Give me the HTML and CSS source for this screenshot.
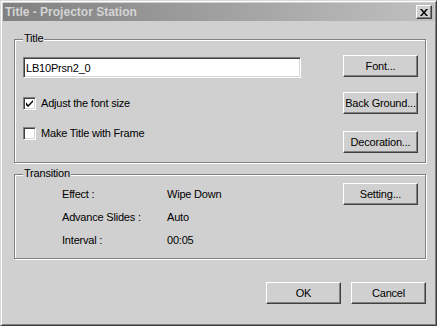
FILE: index.html
```html
<!DOCTYPE html>
<html lang="en">
<head>
    <meta charset="UTF-8">
    <title>Title - Projector Station</title>
    <link rel="stylesheet" href="styles.css">
</head>
<body>
<div class="window">
    <div class="titlebar">
        <span class="caption">Title - Projector Station</span>
        <button class="close" type="button">
            <svg width="8" height="7" viewBox="0 0 8 7">
                <path d="M0 0h2l2 2.5L6 0h2L5 3.5 8 7H6L4 4.5 2 7H0l3-3.5z" fill="#000"/>
            </svg>
        </button>
    </div>
    <div class="client">
        <div class="group group-title">
            <span class="legend">Title</span>
            <div class="col-left">
                <input class="textbox" type="text" value="LB10Prsn2_0">
                <label class="check first">
                    <span class="box">
                        <svg width="7" height="7" viewBox="0 0 7 7">
                            <path d="M0 2v3l2 2 5-5V0L2 5z" fill="#000"/>
                        </svg>
                    </span>
                    Adjust the font size
                </label>
                <label class="check second">
                    <span class="box"></span>
                    Make Title with Frame
                </label>
            </div>
            <div class="col-right">
                <button class="btn" type="button">Font...</button>
                <button class="btn bg" type="button">Back Ground...</button>
                <button class="btn deco" type="button">Decoration...</button>
            </div>
        </div>
        <div class="group group-trans">
            <span class="legend">Transition</span>
            <div class="info">
                <span>Effect :</span><span>Wipe Down</span>
                <span>Advance Slides :</span><span>Auto</span>
                <span>Interval :</span><span>00:05</span>
            </div>
            <div class="col-right">
                <button class="btn setting" type="button">Setting...</button>
            </div>
        </div>
        <div class="footer">
            <button class="btn" type="button">OK</button>
            <button class="btn" type="button">Cancel</button>
        </div>
    </div>
</div>
</body>
</html>
```

FILE: styles.css
```css
body {
    margin: 0;
    background: #d0d0d0;
    font-family: "Liberation Sans", Arial, sans-serif;
    font-size: 11px;
    letter-spacing: -0.2px;
    color: #000;
}
.window {
    width: 437px;
    height: 326px;
    box-sizing: border-box;
    background: #d0d0d0;
    border: 1px solid;
    border-color: #d8d8d8 #404040 #404040 #d8d8d8;
    box-shadow: inset 1px 1px #fff, inset -1px -1px #808080;
    padding: 2px;
}
.titlebar {
    height: 18px;
    display: flex;
    align-items: center;
    justify-content: space-between;
    padding-left: 2px;
    background: linear-gradient(to right, #808080, #c0c0c0);
}
.caption {
    font-weight: bold;
    font-size: 12px;
    letter-spacing: 0;
    color: #d4d4d4;
}
.close {
    width: 16px;
    height: 14px;
    margin-right: 2px;
    padding: 0;
    display: flex;
    align-items: center;
    justify-content: center;
    background: #d0d0d0;
    border: 1px solid;
    border-color: #fff #404040 #404040 #fff;
    box-shadow: inset -1px -1px #808080;
}
.group {
    position: relative;
    box-sizing: border-box;
    width: 412px;
    margin-left: 11px;
    border: 1px solid #808080;
    box-shadow: inset 1px 1px #fff, 1px 1px #fff;
    display: flex;
    justify-content: space-between;
}
.group-title {
    height: 124px;
    margin-top: 18px;
}
.group-trans {
    height: 85px;
    margin-top: 11px;
}
.legend {
    position: absolute;
    left: 8px;
    top: -8px;
    line-height: 13px;
    padding: 0 1px;
    background: #d0d0d0;
}
.col-left {
    padding-left: 8px;
    padding-top: 17px;
    display: flex;
    flex-direction: column;
}
.col-right {
    width: 75px;
    margin-right: 7px;
    padding-top: 15px;
    display: flex;
    flex-direction: column;
}
.textbox {
    width: 278px;
    height: 21px;
    box-sizing: border-box;
    margin: 0;
    padding: 0 2px;
    font-family: inherit;
    font-size: 11px;
    letter-spacing: inherit;
    background: #fff;
    border: 1px solid;
    border-color: #808080 #fff #fff #808080;
    box-shadow: inset 1px 1px #404040, inset -1px -1px #d8d8d8;
    outline: none;
}
.check {
    display: flex;
    align-items: center;
    gap: 5px;
    height: 13px;
    line-height: 13px;
}
.check.first {
    margin-top: 19px;
}
.check.second {
    margin-top: 17px;
}
.box {
    width: 13px;
    height: 13px;
    box-sizing: border-box;
    background: #fff;
    border: 1px solid;
    border-color: #808080 #fff #fff #808080;
    box-shadow: inset 1px 1px #404040, inset -1px -1px #d8d8d8;
    display: flex;
    align-items: center;
    justify-content: center;
}
.btn {
    width: 75px;
    height: 22px;
    box-sizing: border-box;
    padding: 0;
    white-space: nowrap;
    font-family: inherit;
    font-size: 11px;
    letter-spacing: inherit;
    color: #000;
    background: #d0d0d0;
    border: 1px solid;
    border-color: #fff #404040 #404040 #fff;
    box-shadow: inset -1px -1px #808080;
}
.btn.bg {
    margin-top: 15px;
}
.btn.deco {
    margin-top: 17px;
}
.group-trans .col-right {
    padding-top: 8px;
}
.info {
    display: grid;
    grid-template-columns: 105px auto;
    grid-auto-rows: 13px;
    row-gap: 10px;
    line-height: 13px;
    padding-left: 47px;
    padding-top: 13px;
    align-content: start;
}
.footer {
    display: flex;
    justify-content: flex-end;
    gap: 10px;
    margin-top: 23px;
    padding-right: 8px;
}
```
